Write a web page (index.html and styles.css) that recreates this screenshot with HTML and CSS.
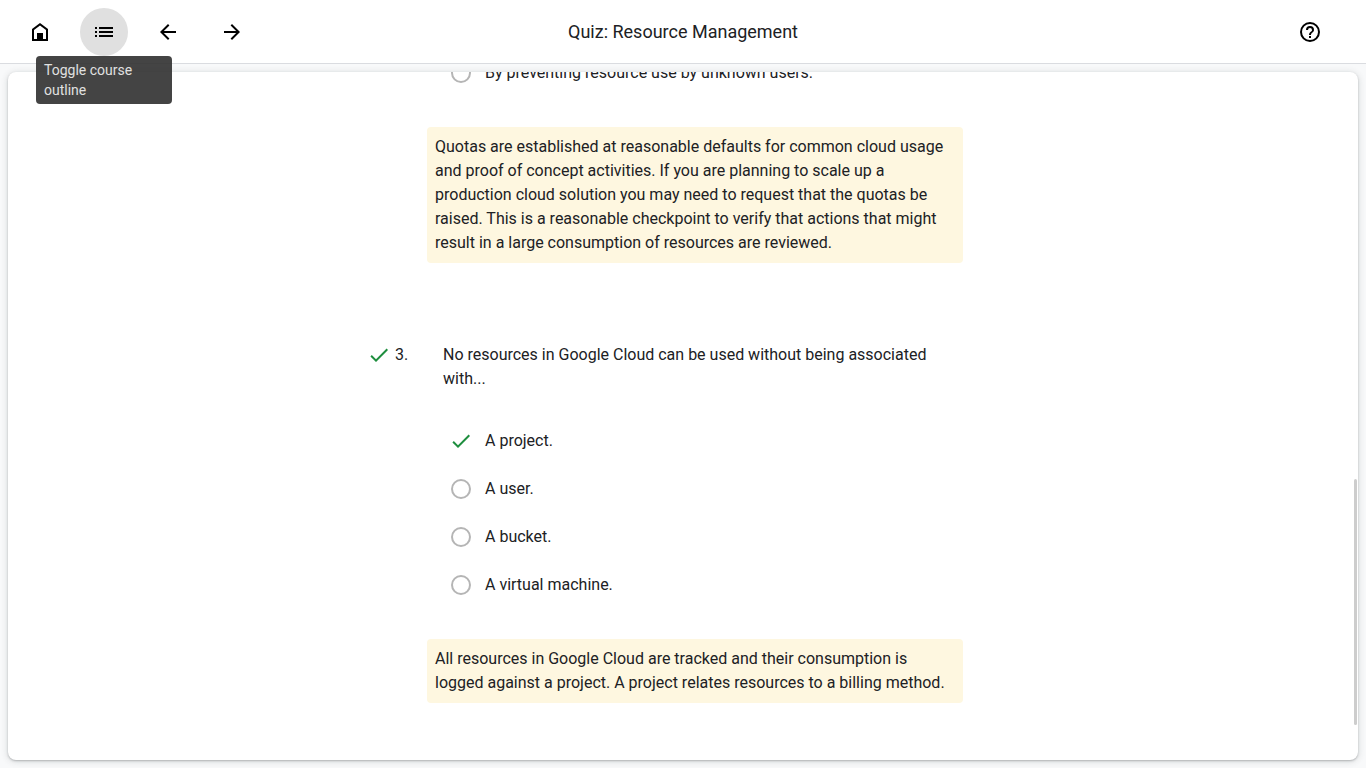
FILE: index.html
```html
<!DOCTYPE html>
<html lang="en">
<head>
<meta charset="utf-8">
<meta name="viewport" content="width=device-width, initial-scale=1">
<title>Quiz: Resource Management</title>
<link rel="stylesheet" href="styles.css">
</head>
<body class="app">
<header class="topbar">
  <nav class="topbar-nav" aria-label="Course">
    <button class="icon-button" type="button" aria-label="Home">
      <svg class="icon" viewBox="0 0 24 24"><path d="M12 3 4 9v12h16V9zm6 16h-3v-6H9v6H6v-9l6-4.500 6 4.500z"/><path d="M9 13h6v7H9z"/></svg>
    </button>
    <div class="tooltip-anchor">
      <button class="icon-button is-active" type="button" aria-label="Toggle course outline" aria-describedby="outline-tip">
        <svg class="icon" viewBox="0 0 24 24"><path d="M3 7h2v2H3zm0 4h2v2H3zm0 4h2v2H3zM7 7h14v2H7zm0 4h14v2H7zm0 4h14v2H7z"/></svg>
      </button>
      <span class="tooltip" id="outline-tip" role="tooltip">Toggle course outline</span>
    </div>
    <button class="icon-button" type="button" aria-label="Previous">
      <svg class="icon" viewBox="0 0 24 24"><path d="M20 11H7.830l5.590-5.590L12 4l-8 8 8 8 1.410-1.410L7.830 13H20z"/></svg>
    </button>
    <button class="icon-button" type="button" aria-label="Next">
      <svg class="icon" viewBox="0 0 24 24"><path d="m12 4-1.410 1.410L16.170 11H4v2h12.170l-5.580 5.590L12 20l8-8z"/></svg>
    </button>
  </nav>
  <h1 class="topbar-title">Quiz: Resource Management</h1>
  <div class="topbar-actions">
    <button class="icon-button" type="button" aria-label="Help">
      <svg class="icon" viewBox="0 0 24 24"><path d="M11 18h2v-2h-2zm1-16a10 10 0 1 0 0 20 10 10 0 0 0 0-20zm0 18a8 8 0 1 1 0-16 8 8 0 0 1 0 16zm0-14a4 4 0 0 0-4 4h2a2 2 0 1 1 4 0c0 2-3 1.750-3 5h2c0-2.250 3-2.500 3-5a4 4 0 0 0-4-4z"/></svg>
    </button>
  </div>
</header>
<main class="page">
  <div class="card">
    <div class="quiz">
      <section class="question">
        <div class="options">
          <label class="option"><input class="option-radio" type="radio" name="q2"><span>By preventing resource use by unknown users.</span></label>
        </div>
        <p class="rationale">Quotas are established at reasonable defaults for common cloud usage and proof of concept activities. If you are planning to scale up a production cloud solution you may need to request that the quotas be raised. This is a reasonable checkpoint to verify that actions that might result in a large consumption of resources are reviewed.</p>
      </section>
      <section class="question">
        <div class="question-head">
          <svg class="check" viewBox="0 0 24 24" role="img" aria-label="Correct"><path d="M9 16.170 4.830 12l-1.420 1.410L9 19 21 7l-1.410-1.410z"/></svg>
          <span class="question-number">3.</span>
          <h2 class="question-text">No resources in Google Cloud can be used without being associated with...</h2>
        </div>
        <div class="options">
          <label class="option"><input class="option-radio is-correct" type="radio" name="q3" checked><svg class="check" viewBox="0 0 24 24" aria-hidden="true"><path d="M9 16.170 4.830 12l-1.420 1.410L9 19 21 7l-1.410-1.410z"/></svg><span>A project.</span></label>
          <label class="option"><input class="option-radio" type="radio" name="q3"><span>A user.</span></label>
          <label class="option"><input class="option-radio" type="radio" name="q3"><span>A bucket.</span></label>
          <label class="option"><input class="option-radio" type="radio" name="q3"><span>A virtual machine.</span></label>
        </div>
        <p class="rationale">All resources in Google Cloud are tracked and their consumption is logged against a project. A project relates resources to a billing method.</p>
      </section>
    </div>
    <div class="scroll-thumb"></div>
  </div>
</main>
</body>
</html>
```
FILE: styles.css
```css
* { box-sizing: border-box; }

.app {
  display: flex;
  flex-direction: column;
  height: 100vh;
  margin: 0;
  overflow: hidden;
  background: #f8f9fa;
  color: #202124;
  font: 16px/24px Roboto, sans-serif;
}

.topbar {
  display: grid;
  grid-template-columns: 1fr auto 1fr;
  align-items: center;
  height: 64px;
  flex: none;
  padding: 0 32px 0 16px;
  border-bottom: 1px solid #dadce0;
  background: #fff;
}
.topbar-nav { display: flex; gap: 16px; }
.topbar-title {
  margin: 0 0 0 16px;
  font: 400 18px/24px "Google Sans", Roboto, sans-serif;
}
.topbar-actions { display: flex; justify-content: flex-end; }

.icon-button {
  display: flex;
  align-items: center;
  justify-content: center;
  width: 48px;
  height: 48px;
  padding: 0;
  border: 0;
  border-radius: 50%;
  background: transparent;
  color: #000;
}
.icon-button.is-active { background: #e0e0e0; }
.icon { width: 24px; height: 24px; fill: currentColor; }

.tooltip-anchor { position: relative; }
.tooltip {
  position: absolute;
  z-index: 2;
  top: 100%;
  left: 50%;
  width: 136px;
  padding: 4px 8px;
  transform: translateX(-50%);
  border-radius: 4px;
  background: rgba(48, 48, 48, 0.9);
  color: #e0e0e0;
  font-size: 14px;
  line-height: 20px;
}

.page { flex: 1; min-height: 0; padding: 8px; }
.card {
  position: relative;
  display: flex;
  flex-direction: column;
  justify-content: flex-end;
  height: 100%;
  padding-bottom: 57px;
  overflow: hidden;
  border-radius: 8px;
  background: #fff;
  box-shadow: 0 1px 2px rgba(60, 64, 67, 0.3), 0 1px 6px 1px rgba(60, 64, 67, 0.15);
}

.quiz {
  display: flex;
  flex-direction: column;
  gap: 80px;
  width: 100%;
  max-width: 632px;
  margin: 0 auto;
}
.question-head { display: flex; align-items: flex-start; margin-bottom: 26px; }
.question-number { width: 48px; margin-left: 4px; flex: none; }
.question-text { margin: 0 36px 0 0; font: inherit; }

.check { width: 24px; height: 24px; flex: none; fill: #1e8e3e; }
.options { margin-left: 82px; }
.option { display: flex; align-items: center; gap: 12px; height: 48px; }
.option-radio {
  appearance: none;
  width: 20px;
  height: 20px;
  margin: 0 2px;
  border: 2px solid #b5b5b5;
  border-radius: 50%;
}
.option-radio.is-correct { display: none; }

.rationale {
  margin: 30px 36px 0 60px;
  padding: 8px;
  border-radius: 4px;
  background: #fef7e0;
}

.scroll-thumb {
  position: absolute;
  right: 1px;
  bottom: 35px;
  width: 3px;
  height: 246px;
  border-radius: 2px;
  background: #cdcdcd;
}
```
